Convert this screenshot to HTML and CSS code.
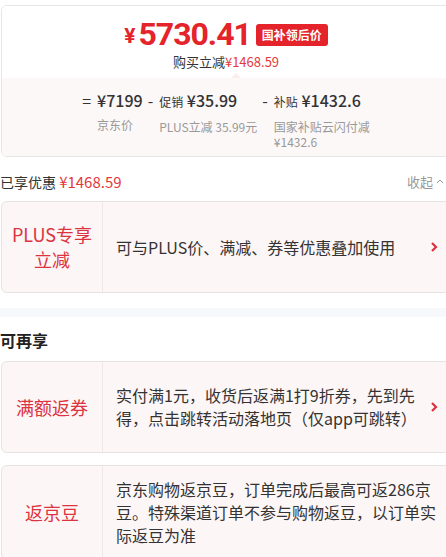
FILE: index.html
```html
<!DOCTYPE html>
<html lang="zh-CN">
<head>
<meta charset="utf-8">
<link rel="stylesheet" href="styles.css">
</head>
<body>
<div class="page">
  <div class="summary">
    <div class="summary-top">
      <div class="price-line">
        <span class="yen">¥</span><span class="price">5730.41</span><span class="badge">国补领后价</span>
      </div>
      <div class="save-line">购买立减<span class="red">¥1468.59</span></div>
    </div>
    <div class="summary-bottom">
      <span class="pointer"></span>
      <div class="bd">
        <div class="bd-item">
          <span class="op">=</span>
          <div class="bd-col">
            <div class="bd-val">¥7199</div>
            <div class="bd-label">京东价</div>
          </div>
        </div>
        <div class="bd-item">
          <span class="op">-</span>
          <div class="bd-col">
            <div class="bd-val"><span class="tag">促销</span> ¥35.99</div>
            <div class="bd-label">PLUS立减 35.99元</div>
          </div>
        </div>
        <div class="bd-item">
          <span class="op">-</span>
          <div class="bd-col narrow">
            <div class="bd-val"><span class="tag">补贴</span> ¥1432.6</div>
            <div class="bd-label">国家补贴云闪付减 ¥1432.6</div>
          </div>
        </div>
      </div>
    </div>
  </div>

  <div class="enjoyed">
    <div class="enjoyed-left">已享优惠 <span class="red-light">¥1468.59</span></div>
    <div class="collapse">收起 <svg class="up" width="8" height="6" viewBox="0 0 8 6"><path d="M1 5 L4 2 L7 5" fill="none" stroke="#999" stroke-width="1"/></svg></div>
  </div>

  <div class="promo">
    <div class="promo-name">PLUS专享<br>立减</div>
    <div class="promo-desc">可与PLUS价、满减、券等优惠叠加使用</div>
    <svg class="arrow" width="8" height="12" viewBox="0 0 8 12"><path d="M2 2 L6 6 L2 10" fill="none" stroke="#e0303d" stroke-width="2.2"/></svg>
  </div>

  <div class="band"></div>

  <div class="section-title">可再享</div>

  <div class="promo">
    <div class="promo-name">满额返券</div>
    <div class="promo-desc">实付满1元，收货后返满1打9折券，先到先得，点击跳转活动落地页（仅app可跳转）</div>
    <svg class="arrow" width="8" height="12" viewBox="0 0 8 12"><path d="M2 2 L6 6 L2 10" fill="none" stroke="#e0303d" stroke-width="2.2"/></svg>
  </div>

  <div class="promo last">
    <div class="promo-name">返京豆</div>
    <div class="promo-desc">京东购物返京豆，订单完成后最高可返286京豆。特殊渠道订单不参与购物返豆，以订单实际返豆为准</div>
  </div>
</div>
</body>
</html>
```

FILE: styles.css
```css
html, body {
  margin: 0;
  padding: 0;
  overflow: hidden;
  background: #fff;
}
body {
  font-family: "Noto Sans CJK SC", "Microsoft YaHei", sans-serif;
  color: #333;
}
.page {
  width: 452px;
}
.summary {
  margin: 5px 0 0 1px;
  width: 450px;
  border: 1px solid #e6e6e6;
  border-radius: 6px;
  overflow: hidden;
  box-sizing: border-box;
}
.summary-top {
  height: 72px;
  padding-top: 12px;
  box-sizing: border-box;
  display: flex;
  flex-direction: column;
  align-items: center;
  background: #fff;
}
.price-line {
  display: flex;
  align-items: center;
  height: 32px;
  line-height: 1;
  color: #e4232b;
  font-weight: 700;
  font-family: Roboto, "Noto Sans CJK SC", sans-serif;
}
.yen {
  font-size: 21px;
  margin-top: 4px;
  margin-right: 3px;
}
.price {
  font-size: 32px;
  letter-spacing: -1px;
}
.badge {
  margin-left: 5px;
  background: #e4232b;
  color: #fff;
  font-family: "Noto Sans CJK SC", sans-serif;
  font-size: 12px;
  font-weight: 700;
  line-height: 22px;
  padding: 0 6px;
  border-radius: 3px;
  margin-top: 2px;
}
.save-line {
  margin-top: 3px;
  font-size: 13px;
  line-height: 18px;
  color: #333;
}
.red { color: #e4393c; }
.red-light { color: #e4393c; }
.summary-bottom {
  position: relative;
  background: #fcf8f8;
  height: 78px;
  padding-top: 11px;
  box-sizing: border-box;
}
.pointer {
  position: absolute;
  left: 229px;
  top: -5px;
  width: 0;
  height: 0;
  border-left: 5px solid transparent;
  border-right: 5px solid transparent;
  border-bottom: 5px solid #fbeeee;
}
.bd {
  display: flex;
  justify-content: center;
  gap: 5px;
  padding-left: 4px;
}
.bd-item {
  display: flex;
  gap: 6px;
}
.op {
  font-size: 16px;
  line-height: 22px;
  color: #333;
}
.bd-col {
  display: flex;
  flex-direction: column;
}
.bd-col.narrow {
  width: 100px;
}
.bd-val {
  font-size: 16px;
  line-height: 22px;
  font-weight: 500;
  color: #333;
  white-space: nowrap;
}
.tag {
  font-size: 12px;
  font-weight: 400;
}
.bd-label {
  margin-top: 6px;
  font-size: 12px;
  line-height: 15px;
  color: #999;
}
.enjoyed {
  margin-top: 13px;
  display: flex;
  justify-content: space-between;
  align-items: center;
  height: 22px;
}
.enjoyed-left {
  font-size: 14px;
  color: #333;
}
.red-light {
  font-size: 15px;
}
.collapse {
  font-size: 13px;
  color: #999;
  display: flex;
  align-items: center;
  gap: 3px;
  margin-right: 8px;
}
.promo {
  margin: 9px 0 0 1px;
  width: 450px;
  min-height: 92px;
  box-sizing: border-box;
  border: 1px solid #e8e2e2;
  border-radius: 6px;
  background: #fdf6f6;
  display: flex;
  align-items: stretch;
}
.promo-name {
  width: 100px;
  flex: none;
  border-right: 1px solid #efe6e6;
  display: flex;
  align-items: center;
  justify-content: center;
  text-align: center;
  font-size: 18px;
  line-height: 25px;
  color: #dc3340;
}
.promo-desc {
  flex: 1;
  padding: 12px 6px 12px 13px;
  display: flex;
  align-items: center;
  font-size: 16px;
  line-height: 23px;
  color: #333;
}
.arrow {
  align-self: center;
  flex: none;
  margin-right: 12px;
}
.promo.last {
  margin-top: 12px;
}
.promo.last .promo-desc {
  padding-right: 13px;
}
.band {
  margin-top: 15px;
  height: 9px;
  background: #f7f8fc;
}
.section-title {
  margin-top: 12px;
  font-size: 16px;
  font-weight: 700;
  line-height: 22px;
  color: #222;
}
.section-title + .promo {
  margin-top: 10px;
}
```
